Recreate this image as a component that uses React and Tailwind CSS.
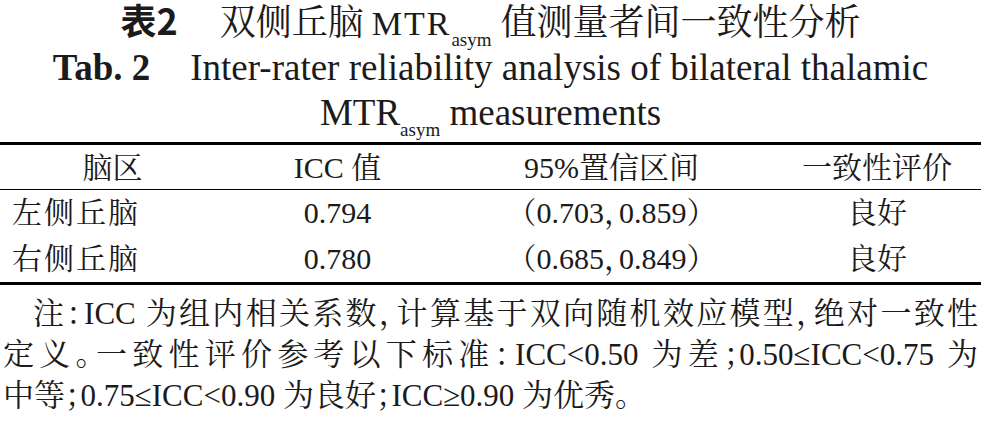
import React from 'react';

const SERIF = "[font-family:'Liberation_Serif','Noto_Serif_CJK_SC','Noto_Sans_CJK_SC',serif]";

const COLS = 'grid grid-cols-[225px_225px_323px_208px]';

const ROWS = [
  { region: '左侧丘脑', icc: '0.794', ci: '（0.703，0.859）', grade: '良好', pad: 'pb-[16px]' },
  { region: '右侧丘脑', icc: '0.780', ci: '（0.685，0.849）', grade: '良好', pad: 'pb-[12px]' },
];

function Mtr({ big }) {
  return (
    <span className={big ? 'text-[34px] tracking-[2px]' : ''}>
      MTR<sub className="text-[19px] tracking-normal align-[-6px] leading-none">asym</sub>
    </span>
  );
}

export default function App() {
  return (
    <div className={`w-[981px] h-[424px] overflow-hidden bg-white text-[#1c1a1a] ${SERIF} [font-feature-settings:'halt']`}>
      {/* caption */}
      <div className="text-center text-[37px] leading-[45px] whitespace-nowrap">
        <div className="h-[45px] text-[36px] leading-[39px]">
          <span className="[font-family:'Noto_Sans_CJK_SC',sans-serif] font-bold">表2</span>
          <span className="ml-[42px]">双侧丘脑</span>
          <span className="ml-[8px] mr-[9px]"><Mtr big /></span>
          <span>值测量者间一致性分析</span>
        </div>
        <div>
          <span className="font-bold">Tab. 2</span>
          <span className="ml-[40px]">Inter-rater reliability analysis of bilateral thalamic</span>
        </div>
        <div>
          <Mtr /> measurements
        </div>
      </div>

      {/* table */}
      <div className="mt-[7px] border-t-[3px] border-b-[3px] border-black text-[30px]">
        <div className={`${COLS} h-[45px] pb-[10px] items-center text-center border-b border-black`}>
          <div>脑区</div>
          <div>ICC 值</div>
          <div>95%置信区间</div>
          <div>一致性评价</div>
        </div>
        {ROWS.map((r) => (
          <div key={r.region} className={`${COLS} h-[46px] items-center text-center ${r.pad}`}>
            <div className="text-left pl-[12px] tracking-[2px]">{r.region}</div>
            <div>{r.icc}</div>
            <div>{r.ci}</div>
            <div>{r.grade}</div>
          </div>
        ))}
      </div>

      {/* note */}
      <div className="mt-[8px] px-[3px] text-[31px] leading-[41px] whitespace-nowrap">
        <div className="text-justify [text-align-last:justify] pl-[30px]">
          注：ICC 为组内相关系数，计算基于双向随机效应模型，绝对一致性
        </div>
        <div className="text-justify [text-align-last:justify]">
          定义。一致性评价参考以下标准：ICC&lt;0.50 为差；0.50≤ICC&lt;0.75 为
        </div>
        <div>中等；0.75≤ICC&lt;0.90 为良好；ICC≥0.90 为优秀。</div>
      </div>
    </div>
  );
}
